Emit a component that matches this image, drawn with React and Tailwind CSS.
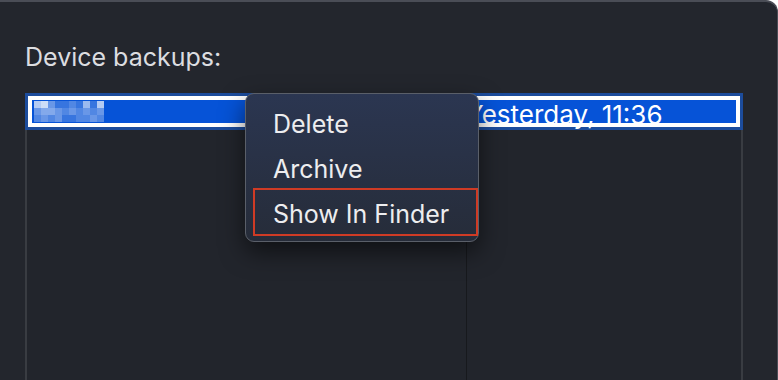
import React from "react";

const mosaic = [
  ["bg-white/70", "bg-white/80", "bg-white/40", "bg-white/20", "bg-white/20", "bg-white/30", "bg-white/20", "bg-white/60", "bg-white/20", "bg-white/70"],
  ["bg-white/40", "bg-white/50", "bg-white/50", "bg-white/40", "bg-white/30", "bg-white/40", "bg-white/30", "bg-white/40", "bg-white/30", "bg-white/40"],
  ["bg-white/30", "bg-white/40", "bg-white/30", "bg-white/40", "bg-white/20", "bg-white/20", "bg-white/30", "bg-white/30", "bg-white/40", "bg-white/30"],
];

function BlurredName() {
  // nombre pixelado, como en la captura
  return (
    <div className="flex flex-col mt-[1px]">
      {mosaic.map((fila, i) => (
        <div key={i} className="flex">
          {fila.map((c, j) => (
            <span key={j} className={`w-[7px] h-[7px] ${c}`} />
          ))}
        </div>
      ))}
    </div>
  );
}

function MenuContextual() {
  const items = ["Delete", "Archive", "Show In Finder"];
  return (
    <div className="absolute left-[245px] top-[91px] w-[234px] h-[149px] rounded-[9px] border border-[#5a5f69] bg-gradient-to-b from-[#2b3651] to-[#262c39] shadow-[0_10px_24px_rgba(0,0,0,0.55)] pt-[8px]">
      {items.map((item) => (
        <div
          key={item}
          className="h-[45px] leading-[45px] pl-[27px] text-[25px] text-[#ededef]"
        >
          {item}
        </div>
      ))}
      <div className="absolute left-[7px] top-[94px] w-[225px] h-[48px] border-2 border-[#cf3b25]" />
    </div>
  );
}

export default function App() {
  return (
    <div
      className="relative w-[778px] h-[380px] overflow-hidden bg-[#23262d] border-t-2 border-r border-[#4a4d56] rounded-tr-[12px] pt-[40px] pl-[25px]"
      style={{ fontFamily: "Inter, 'Liberation Sans', sans-serif" }}
    >
      <div className="h-[30px] leading-[30px] text-[25px] text-[#dcdde0]">
        Device backups:
      </div>

      <div className="mt-[21px] w-[718px] h-[300px] flex flex-col border-l-2 border-r-2 border-[#393c42] bg-[#22252c]">
        <div className="h-[37px] shrink-0 bg-[#1c4c9c] p-[3px] -ml-[2px] -mr-[2px]">
          <div className="h-full border-4 border-white bg-[#0653d7] flex">
            <div className="w-[434px] pl-[2px]">
              <BlurredName />
            </div>
            <div className="flex-1 overflow-visible pt-[2px]">
              <div className="text-[26px] leading-[25px] text-white whitespace-nowrap">
                Yesterday, 11:36
              </div>
            </div>
          </div>
        </div>
        <div className="flex flex-1">
          <div className="w-[440px] border-r border-[#17191d]" />
          <div className="flex-1" />
        </div>
      </div>

      <MenuContextual />
    </div>
  );
}
